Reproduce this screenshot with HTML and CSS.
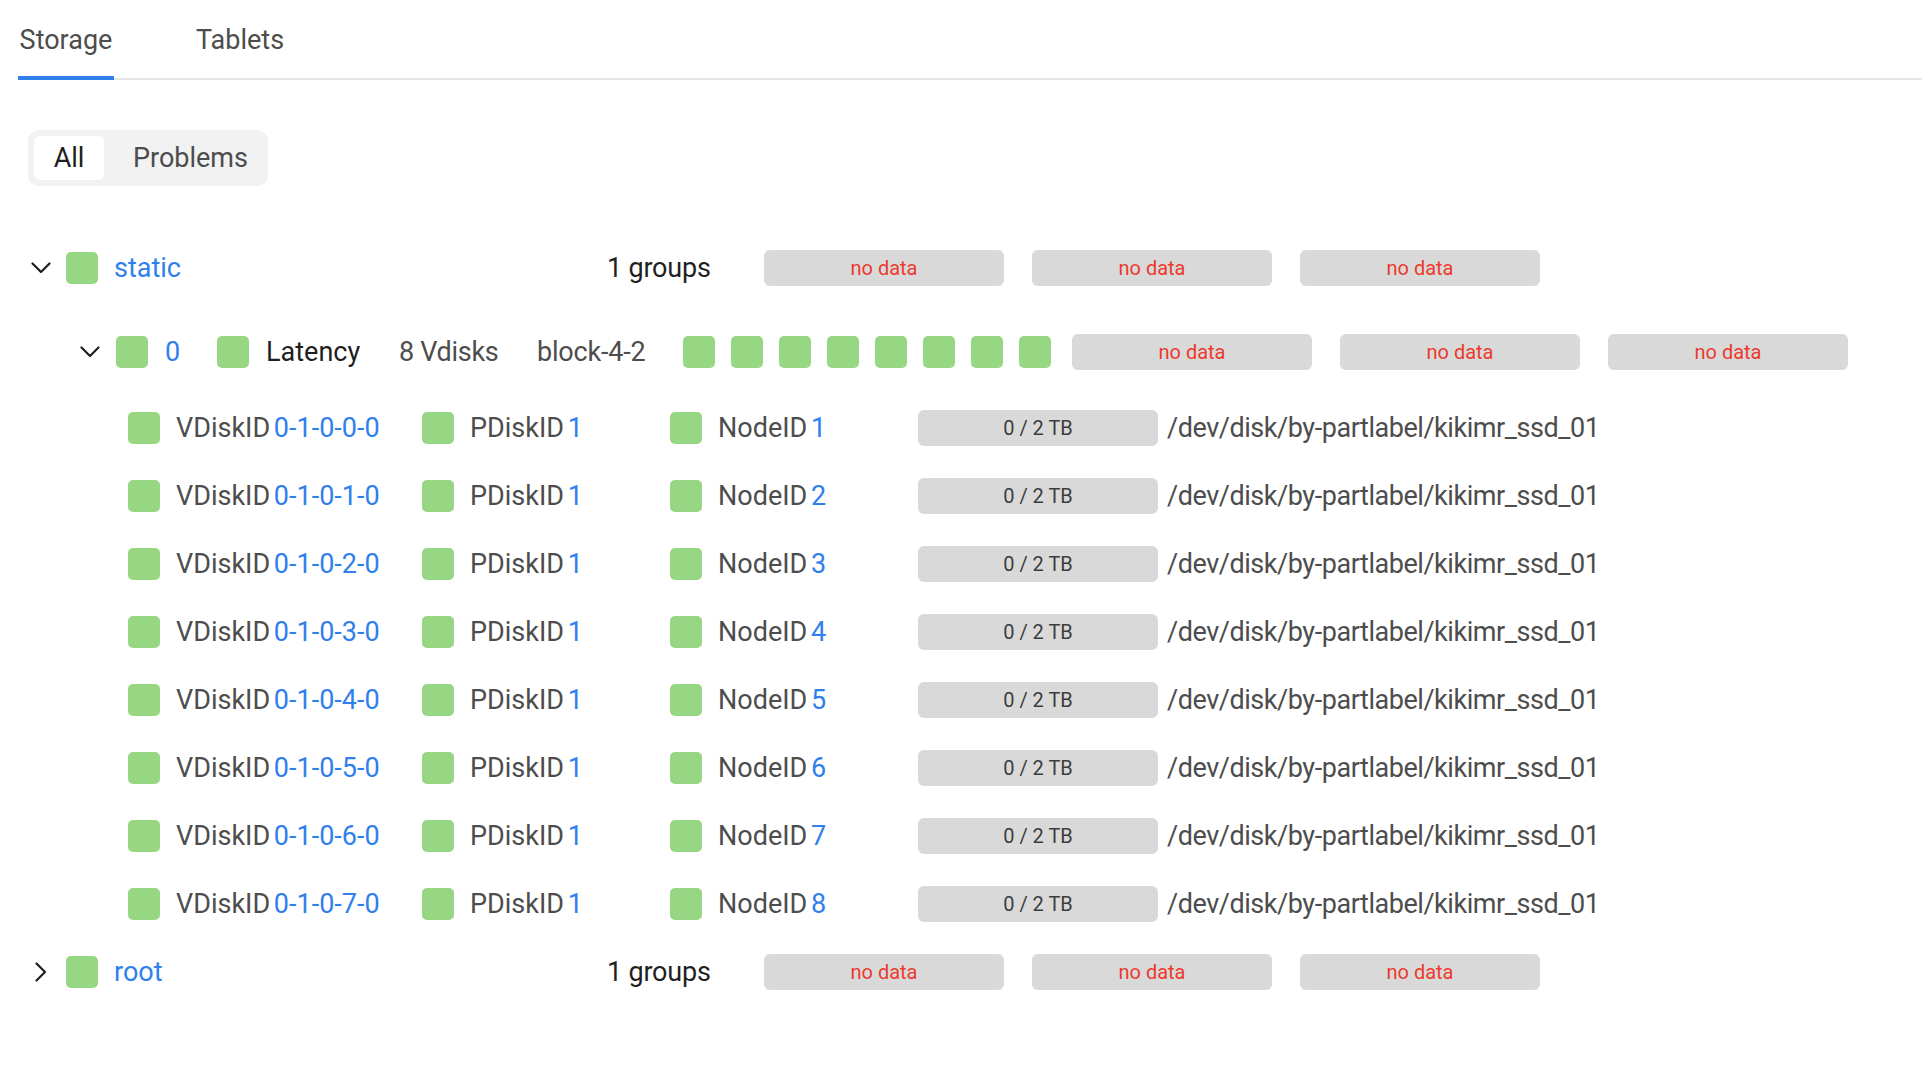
FILE: index.html
```html
<!DOCTYPE html>
<html lang="en">
<head>
<meta charset="utf-8">
<title>Storage</title>
<link rel="stylesheet" href="styles.css">
</head>
<body>
<div class="tabs">
  <div class="tab tab-active">Storage</div>
  <div class="tab">Tablets</div>
</div>

<div class="segmented">
  <div class="seg-opt seg-all seg-active">All</div>
  <div class="seg-opt seg-problems">Problems</div>
</div>

<div class="tree">
  <div class="row row-pool">
    <span class="chev"><svg width="20" height="12" viewBox="0 0 20 12"><path d="M1.5 1.5 L10 10 L18.5 1.5" /></svg></span>
    <span class="sq"></span>
    <span class="link pool-name">static</span>
    <span class="groups">1 groups</span>
    <span class="bar nodata">no data</span>
    <span class="bar nodata">no data</span>
    <span class="bar nodata">no data</span>
  </div>

  <div class="row row-group">
    <span class="chev"><svg width="20" height="12" viewBox="0 0 20 12"><path d="M1.5 1.5 L10 10 L18.5 1.5" /></svg></span>
    <span class="sq"></span>
    <span class="link group-id">0</span>
    <span class="sq"></span>
    <span class="group-kind">Latency</span>
    <span class="group-count">8 Vdisks</span>
    <span class="group-erasure">block-4-2</span>
    <span class="squares">
      <span class="sq"></span><span class="sq"></span><span class="sq"></span><span class="sq"></span>
      <span class="sq"></span><span class="sq"></span><span class="sq"></span><span class="sq"></span>
    </span>
    <span class="bar nodata">no data</span>
    <span class="bar nodata">no data</span>
    <span class="bar nodata">no data</span>
  </div>

  <div class="vdisks">
    <div class="row row-vdisk">
      <span class="cell cell-vdisk"><span class="sq"></span><span class="label">VDiskID <span class="link">0-1-0-0-0</span></span></span>
      <span class="cell cell-pdisk"><span class="sq"></span><span class="label">PDiskID <span class="link">1</span></span></span>
      <span class="cell cell-node"><span class="sq"></span><span class="label">NodeID <span class="link">1</span></span></span>
      <span class="bar usage">0 / 2 TB</span>
      <span class="path">/dev/disk/by-partlabel/kikimr_ssd_01</span>
    </div>
    <div class="row row-vdisk">
      <span class="cell cell-vdisk"><span class="sq"></span><span class="label">VDiskID <span class="link">0-1-0-1-0</span></span></span>
      <span class="cell cell-pdisk"><span class="sq"></span><span class="label">PDiskID <span class="link">1</span></span></span>
      <span class="cell cell-node"><span class="sq"></span><span class="label">NodeID <span class="link">2</span></span></span>
      <span class="bar usage">0 / 2 TB</span>
      <span class="path">/dev/disk/by-partlabel/kikimr_ssd_01</span>
    </div>
    <div class="row row-vdisk">
      <span class="cell cell-vdisk"><span class="sq"></span><span class="label">VDiskID <span class="link">0-1-0-2-0</span></span></span>
      <span class="cell cell-pdisk"><span class="sq"></span><span class="label">PDiskID <span class="link">1</span></span></span>
      <span class="cell cell-node"><span class="sq"></span><span class="label">NodeID <span class="link">3</span></span></span>
      <span class="bar usage">0 / 2 TB</span>
      <span class="path">/dev/disk/by-partlabel/kikimr_ssd_01</span>
    </div>
    <div class="row row-vdisk">
      <span class="cell cell-vdisk"><span class="sq"></span><span class="label">VDiskID <span class="link">0-1-0-3-0</span></span></span>
      <span class="cell cell-pdisk"><span class="sq"></span><span class="label">PDiskID <span class="link">1</span></span></span>
      <span class="cell cell-node"><span class="sq"></span><span class="label">NodeID <span class="link">4</span></span></span>
      <span class="bar usage">0 / 2 TB</span>
      <span class="path">/dev/disk/by-partlabel/kikimr_ssd_01</span>
    </div>
    <div class="row row-vdisk">
      <span class="cell cell-vdisk"><span class="sq"></span><span class="label">VDiskID <span class="link">0-1-0-4-0</span></span></span>
      <span class="cell cell-pdisk"><span class="sq"></span><span class="label">PDiskID <span class="link">1</span></span></span>
      <span class="cell cell-node"><span class="sq"></span><span class="label">NodeID <span class="link">5</span></span></span>
      <span class="bar usage">0 / 2 TB</span>
      <span class="path">/dev/disk/by-partlabel/kikimr_ssd_01</span>
    </div>
    <div class="row row-vdisk">
      <span class="cell cell-vdisk"><span class="sq"></span><span class="label">VDiskID <span class="link">0-1-0-5-0</span></span></span>
      <span class="cell cell-pdisk"><span class="sq"></span><span class="label">PDiskID <span class="link">1</span></span></span>
      <span class="cell cell-node"><span class="sq"></span><span class="label">NodeID <span class="link">6</span></span></span>
      <span class="bar usage">0 / 2 TB</span>
      <span class="path">/dev/disk/by-partlabel/kikimr_ssd_01</span>
    </div>
    <div class="row row-vdisk">
      <span class="cell cell-vdisk"><span class="sq"></span><span class="label">VDiskID <span class="link">0-1-0-6-0</span></span></span>
      <span class="cell cell-pdisk"><span class="sq"></span><span class="label">PDiskID <span class="link">1</span></span></span>
      <span class="cell cell-node"><span class="sq"></span><span class="label">NodeID <span class="link">7</span></span></span>
      <span class="bar usage">0 / 2 TB</span>
      <span class="path">/dev/disk/by-partlabel/kikimr_ssd_01</span>
    </div>
    <div class="row row-vdisk">
      <span class="cell cell-vdisk"><span class="sq"></span><span class="label">VDiskID <span class="link">0-1-0-7-0</span></span></span>
      <span class="cell cell-pdisk"><span class="sq"></span><span class="label">PDiskID <span class="link">1</span></span></span>
      <span class="cell cell-node"><span class="sq"></span><span class="label">NodeID <span class="link">8</span></span></span>
      <span class="bar usage">0 / 2 TB</span>
      <span class="path">/dev/disk/by-partlabel/kikimr_ssd_01</span>
    </div>
  </div>

  <div class="row row-pool">
    <span class="chev chev-right"><svg width="12" height="20" viewBox="0 0 12 20"><path d="M1.5 1.5 L10 10 L1.5 18.5" /></svg></span>
    <span class="sq"></span>
    <span class="link pool-name">root</span>
    <span class="groups">1 groups</span>
    <span class="bar nodata">no data</span>
    <span class="bar nodata">no data</span>
    <span class="bar nodata">no data</span>
  </div>
</div>
</body>
</html>
```

FILE: styles.css
```css
* { box-sizing: border-box; }

html, body {
  margin: 0;
  padding: 0;
  background: #ffffff;
}

body {
  font-family: Roboto, "Liberation Sans", sans-serif;
  font-size: 27px;
  line-height: 36px;
  color: #262626;
}

/* ---------- tabs ---------- */
.tabs {
  display: flex;
  align-items: flex-start;
  gap: 80px;
  margin-left: 18px;
  height: 80px;
  border-bottom: 2px solid #e6e6e6;
}

.tab {
  height: 80px;
  padding: 8px 2px 4px;
  display: flex;
  align-items: center;
  color: #4d4d4d;
  border-bottom: 4px solid transparent;
  margin-bottom: -2px;
}

.tab-active {
  width: 96px;
  justify-content: center;
  border-bottom-color: #2f80ed;
}

/* ---------- segmented ---------- */
.segmented {
  display: inline-flex;
  margin: 50px 0 0 28px;
  padding: 6px;
  background: #f2f2f2;
  border-radius: 10px;
}

.seg-opt {
  height: 44px;
  display: flex;
  align-items: center;
  color: #4d4d4d;
  border-radius: 6px;
}

.seg-all {
  width: 70px;
  justify-content: center;
}
.seg-problems {
  width: 158px;
  padding-left: 29px;
}

.seg-active {
  background: #ffffff;
  color: #1f1f1f;
}

/* ---------- tree ---------- */
.tree {
  margin-top: 48px;
}

.row {
  display: flex;
  align-items: center;
  height: 68px;
}

.sq {
  display: inline-block;
  flex: none;
  width: 32px;
  height: 32px;
  border-radius: 5px;
  background: #97d783;
}

.link { color: #2f80ed; }

.chev {
  flex: none;
  width: 20px;
  height: 20px;
  display: flex;
  align-items: center;
  justify-content: center;
}

.chev svg path {
  fill: none;
  stroke: #1f1f1f;
  stroke-width: 2.2;
  stroke-linecap: round;
  stroke-linejoin: round;
}

.bar {
  flex: none;
  width: 240px;
  height: 36px;
  border-radius: 6px;
  background: #d9d9d9;
  display: flex;
  align-items: center;
  justify-content: center;
  font-size: 20px;
  line-height: 24px;
}

.nodata { color: #ec3a2d; }
.usage { color: #3d3d3d; }

/* pool rows */
.row-pool { padding-left: 31px; }
.row-pool .sq { margin-left: 15px; }
.pool-name {
  margin-left: 16px;
  width: 493px;
}
.groups {
  width: 157px;
  color: #1f1f1f;
  letter-spacing: -0.2px;
}
.row-pool .bar + .bar { margin-left: 28px; }

/* group row */
.row-group {
  margin-top: 16px;
  padding-left: 80px;
}
.row-group > .sq { margin-left: 16px; }
.group-id {
  margin-left: 17px;
  width: 36px;
}
.group-kind {
  margin-left: 17px;
  width: 133px;
  color: #1f1f1f;
}
.group-count {
  width: 138px;
  color: #4d4d4d;
  letter-spacing: -0.3px;
}
.group-erasure {
  width: 146px;
  color: #4d4d4d;
  letter-spacing: -0.2px;
}
.squares {
  display: flex;
  gap: 16px;
  margin-right: 21px;
}
.row-group .bar + .bar { margin-left: 28px; }

/* vdisk rows */
.vdisks {
  margin-top: 8px;
}
.row-vdisk { padding-left: 128px; }

.cell {
  display: flex;
  align-items: center;
  gap: 16px;
  flex: none;
}
.cell-vdisk { width: 294px; }
.cell-pdisk { width: 248px; }
.cell-node { width: 248px; }

.label {
  color: #4d4d4d;
  white-space: nowrap;
  word-spacing: -3px;
}

.path {
  margin-left: 9px;
  color: #4d4d4d;
  white-space: nowrap;
  letter-spacing: -0.45px;
}
```
